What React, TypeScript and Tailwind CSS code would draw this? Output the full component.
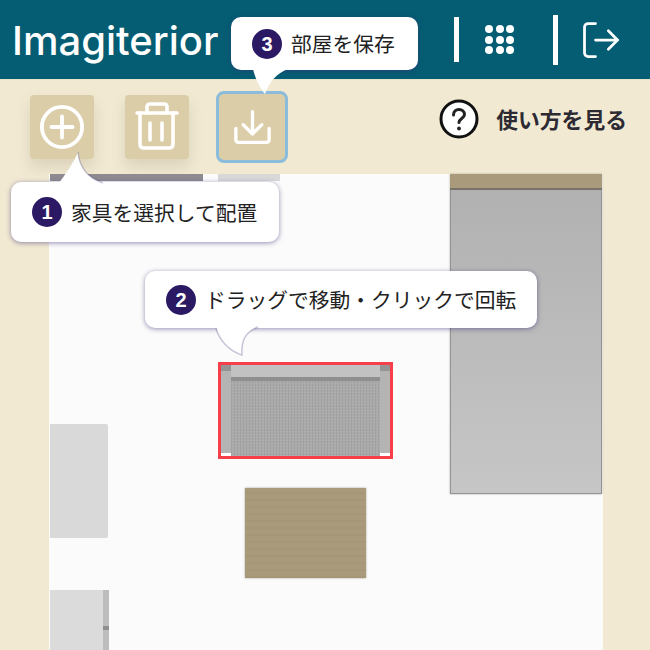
import { LogOut } from 'lucide-react';
import type { ReactNode } from 'react';

const jp = { fontFamily: '"Noto Sans CJK JP", sans-serif' };
const tailEdge = 'rgba(60,50,120,0.28)';

function Badge({ n }: { n: number }) {
  return (
    <span className="flex h-[30px] w-[30px] shrink-0 items-center justify-center rounded-full bg-[#2b1a63] text-[20px] font-bold text-white [font-family:'Liberation_Sans',sans-serif]">
      {n}
    </span>
  );
}

function Tile({ children, selected }: { children: ReactNode; selected?: boolean }) {
  return (
    <div
      className={`flex items-center justify-center bg-[#dbcda8] text-white ${
        selected
          ? 'h-[72px] w-[72px] rounded-lg border-[3px] border-[#8cbcdc]'
          : 'h-[64px] w-[64px] rounded shadow-[0_8px_14px_rgba(120,110,90,0.18)]'
      }`}
    >
      {children}
    </div>
  );
}

function Bubble({ n, text, className, tail }: { n: number; text: string; className: string; tail: ReactNode }) {
  return (
    <div
      className={`absolute z-10 flex items-center gap-[9px] rounded-[10px] bg-white text-[20.75px] leading-none text-[#222] shadow-[0_1px_5px_rgba(60,50,120,0.55)] ${className}`}
      style={jp}
    >
      <Badge n={n} />
      <span className="whitespace-nowrap">{text}</span>
      {tail}
    </div>
  );
}

export default function App() {
  return (
    <div className="flex h-[650px] w-[650px] flex-col overflow-hidden bg-[#f1e9d2]">
      {/* Header */}
      <header className="flex h-[80px] shrink-0 items-center justify-between border-b border-[#e8e2c8] bg-[#045d72] pl-[12px] pr-[27px]">
        <div className="pt-[3px] text-[40px] font-medium leading-none text-white [font-family:Inter,sans-serif]">
          Imagiterior
        </div>
        <div className="flex items-center">
          <div className="h-[45px] w-[5px] bg-white" />
          <div className="ml-[26px] mr-[39px] grid grid-cols-3 gap-[2.5px]">
            {Array.from({ length: 9 }).map((_, i) => (
              <span key={i} className="h-[8px] w-[8px] rounded-full bg-white" />
            ))}
          </div>
          <div className="h-[50px] w-[5px] bg-white" />
          <LogOut className="ml-[21px] h-[44px] w-[44px] text-white" strokeWidth={1.5} />
        </div>
      </header>

      {/* Toolbar */}
      <div className="relative flex h-[94px] shrink-0 items-center pl-[30px]">
        <div className="flex items-center">
          <Tile>
            <svg viewBox="0 0 48 48" className="h-[46px] w-[46px]" fill="none" stroke="currentColor" strokeWidth="4" strokeLinecap="round">
              <circle cx="24" cy="24" r="21" />
              <path d="M24 13v22M13 24h22" />
            </svg>
          </Tile>
          <div className="ml-[31px]">
            <Tile>
              <svg viewBox="0 0 64 64" className="h-[64px] w-[64px]" fill="none" stroke="currentColor" strokeWidth="3.6" strokeLinecap="round" strokeLinejoin="round">
                <path d="M12 18h40" />
                <path d="M22 18v-6q0-3 3-3h14q3 0 3 3v6" />
                <path d="M15 18v31q0 4 4 4h25q4 0 4-4V18" />
                <path d="M25 28v17M37 28v17" />
              </svg>
            </Tile>
          </div>
          <div className="ml-[27px]">
            <Tile selected>
              <svg viewBox="0 0 40 40" className="h-[37px] w-[37px]" fill="none" stroke="currentColor" strokeWidth="3.6" strokeLinecap="round" strokeLinejoin="round">
                <path d="M2 21v12q0 3 3 3h30q3 0 3-3V21" />
                <path d="M20 3v24M10 17l10 10 10-10" />
              </svg>
            </Tile>
          </div>
        </div>
        <div className="ml-auto mr-[23px] flex items-center gap-[17px] self-start pt-[19px]">
          <svg viewBox="0 0 40 40" className="h-[40px] w-[40px]" fill="none">
            <circle cx="20" cy="20" r="18" fill="#fff" stroke="#111" strokeWidth="3" />
            <path d="M14.500 16c0-3.500 2.500-5.500 5.500-5.500s5.500 2 5.500 5c0 4-5.500 4-5.500 8" stroke="#222" strokeWidth="3" strokeLinecap="round" />
            <circle cx="20" cy="29.500" r="1.900" fill="#222" />
          </svg>
          <span className="text-[21.8px] font-bold leading-none text-[#2c2a33]" style={jp}>
            使い方を見る
          </span>
        </div>
      </div>

      {/* Room */}
      <main className="relative ml-[49px] w-[554px] flex-1 bg-[#fbfbfb]">
        <div className="absolute left-[1px] top-0 h-[7px] w-[153px] bg-[#8f8a90]" />
        <div className="absolute left-[169px] top-0 h-[7px] w-[62px] bg-[#d8d8d8]" />

        {/* Bed */}
        <div className="absolute left-[401px] top-0 h-[320px] w-[152px] shadow-[0_0_2px_rgba(120,110,90,0.5)]">
          <div className="h-[16px] border-b-2 border-[#77736a] bg-[#a99a7b]" />
          <div className="h-[304px] border-x border-b border-[#939393] bg-gradient-to-b from-[#b1b1b1] to-[#c6c6c6]" />
        </div>

        {/* Sofa */}
        <div className="absolute left-[169px] top-[188px] h-[97px] w-[175px] border-[3px] border-[#f5404a] bg-[#c4c4c4]">
          <div className="flex h-full">
            <div className="flex w-[10px] flex-col justify-between bg-[#b4b4b4]">
              <div className="h-[6px] bg-[#949494]" />
              <div className="h-[3px] bg-white" />
            </div>
            <div className="flex-1">
              <div className="h-[12px] bg-[#c2c2c2]" />
              <div className="h-[4px] bg-[#8f8f8f]" />
              <div className="h-[75px] bg-[#a9a9a9] bg-[repeating-linear-gradient(90deg,rgba(0,0,0,0.05)_0_1px,transparent_1px_3px),repeating-linear-gradient(0deg,rgba(255,255,255,0.06)_0_1px,transparent_1px_3px)]" />
            </div>
            <div className="flex w-[10px] flex-col justify-between bg-[#b4b4b4]">
              <div className="h-[6px] bg-[#949494]" />
              <div className="h-[3px] bg-white" />
            </div>
          </div>
        </div>

        {/* Table */}
        <div className="absolute left-[196px] top-[314px] h-[90px] w-[121px] bg-[#a99a7b] bg-[repeating-linear-gradient(0deg,rgba(0,0,0,0.025)_0_2px,transparent_2px_7px)] shadow-[0_0_2px_rgba(120,110,90,0.6)]" />

        {/* Left units */}
        <div className="absolute left-[1px] top-[250px] h-[114px] w-[58px] rounded-r-[2px] bg-[#d9d9d9]" />
        <div className="absolute left-[1px] top-[416px] flex h-[60px] w-[59px] justify-end bg-[#dbdbdb]">
          <div className="relative w-[6px] bg-[#bdbdbd]">
            <div className="absolute left-0 top-[36px] h-[4px] w-[6px] bg-[#8f8f8f]" />
          </div>
        </div>
      </main>

      {/* Callouts */}
      <Bubble
        n={1}
        text="家具を選択して配置"
        className="left-[11px] top-[182px] h-[60px] w-[268px] pl-[21px]"
        tail={
          <svg viewBox="0 0 50 34" className="absolute left-[46px] top-[-32px] h-[34px] w-[50px]" fill="#fff">
            <path d="M2 33C10 22 17 12 21 2c1 14 9 26 25 31z" />
            <path d="M21 2c1 14 9 26 25 31" fill="none" stroke={tailEdge} strokeWidth="1.5" />
          </svg>
        }
      />
      <Bubble
        n={2}
        text="ドラッグで移動・クリックで回転"
        className="left-[145px] top-[271px] h-[57px] w-[392px] pl-[21px]"
        tail={
          <svg viewBox="0 0 50 32" className="absolute left-[65px] top-[55px] h-[32px] w-[50px]" fill="#fff">
            <path d="M6 1c3 13 13 24 26 28-1-14 3-23 16-28z" />
            <path d="M6 2c3 12 13 23 26 27-1-14 3-23 16-28" fill="none" stroke={tailEdge} strokeWidth="1.5" />
          </svg>
        }
      />
      <Bubble
        n={3}
        text="部屋を保存"
        className="left-[231px] top-[17px] h-[53px] w-[187px] pl-[21px]"
        tail={
          <svg viewBox="0 0 40 28" className="absolute left-[19px] top-[51px] h-[28px] w-[40px]" fill="#fff">
            <path d="M3 1c2 9 7 19 12 25C19 14 27 5 38 1z" />
          </svg>
        }
      />
    </div>
  );
}
